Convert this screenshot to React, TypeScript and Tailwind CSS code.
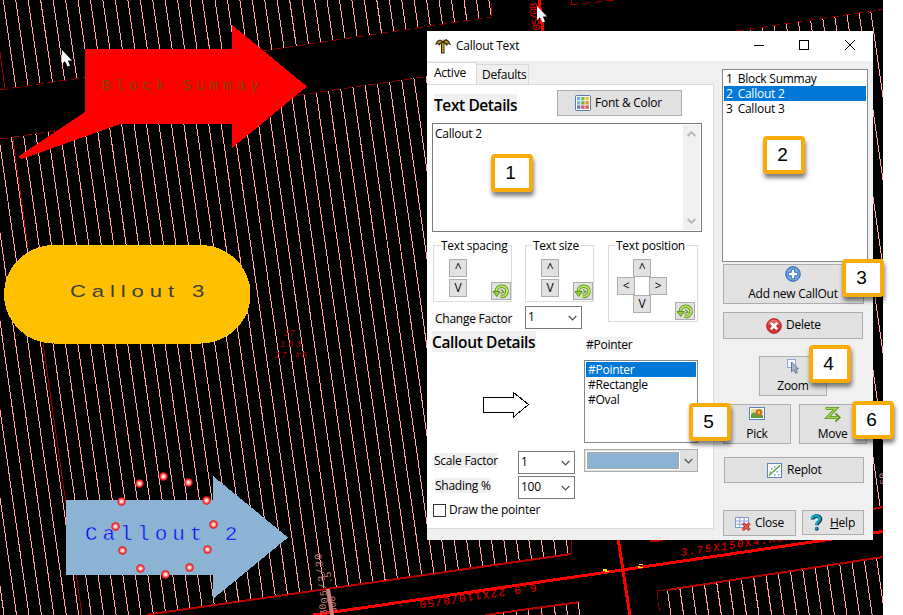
import React from "react";

type Seg = [number, number, number, number];

const range = (n: number, from = 0) => Array.from({ length: n }, (_, i) => i + from);

const upper: Seg[] = range(40).map((k) => {
  const x0 = 3.3 + 12.45 * k;
  const y = (90 - 0.1487 * x0) / 1.0213;
  return [x0, 0, x0 + 0.143 * y, y];
});

const middle: Seg[] = range(47, -7).map((k) => {
  const x0 = 4.5 + 12.45 * k;
  const a = (139 - 0.1467 * x0) / 1.0207;
  const b = (635.8 - 0.1433 * x0) / 1.0202;
  return [x0 + 0.141 * a, a, x0 + 0.141 * b, b];
});

const right: Seg[] = range(14, -3).map((k) => {
  const x0 = 745.1 + 12.4 * k + (k < 10 ? 0.6 : 0);
  const a = (139 - 0.1467 * x0) / 1.0207;
  const b = (636 - 0.146 * x0) / 1.0202;
  return [x0 + 0.143 * a, a, x0 + 0.143 * b, b];
});

const lowerRight: Seg[] = range(18).map((k) => {
  const x = 667.5 + 12.3 * k;
  const y = 590 - 0.154 * (x - 667);
  return [x, y, x + 0.143 * (616 - y), 616];
});

const lowerMid: Seg[] = [503, 516, 528, 541, 554, 566, 578].map((x) => {
  const y = 602 + 0.14 * (578 - x);
  return [x, y, x + 0.143 * (616 - y), 616];
});

const dots = [
  [139.5, 483.5], [163.5, 476.5], [188.5, 482.5], [121.5, 501.5], [206.5, 500.5], [115.5, 526.5],
  [213.5, 524.5], [122.5, 550.5], [207.5, 549.5], [140.5, 568.5], [189.5, 567.5], [165.5, 574.5],
];

function Pointer({ x, y }: { x: number; y: number }) {
  return (
    <path
      transform={`translate(${x} ${y})`}
      d="M0 0V14L3 11.2L5.6 16.4L8 15.4L5.8 10.4H10Z"
      fill="#fff"
    />
  );
}

function Drawing() {
  return (
    <svg width="883" height="615" viewBox="0 0 883 615" className="block bg-black">
      <defs>
        <radialGradient id="dot">
          <stop offset="0" stopColor="#fff" />
          <stop offset="0.35" stopColor="#ffc4c4" />
          <stop offset="0.75" stopColor="#ff3030" />
          <stop offset="1" stopColor="#e01010" />
        </radialGradient>
      </defs>
      <g stroke="#ffa6a6" strokeWidth="1" shapeRendering="crispEdges">
        {[...upper, ...middle, ...right, ...lowerRight, ...lowerMid].map((s, i) => (
          <line key={i} x1={s[0]} y1={s[1]} x2={s[2]} y2={s[3]} />
        ))}
      </g>
      <g stroke="#900000" strokeWidth="1" shapeRendering="crispEdges" fill="none">
        <path d="M0 90L491 17M570 5L615 0M0 139L883 9.5" strokeDasharray="8 4" />
        <path d="M0 52L5 89M571 0V5M491 4V17M13 139L28 247M43 343L82 615M571 540V554" />
        <path d="M657 591L660 615M657 591L667 589.5" strokeDasharray="8 4" />
      </g>
      <g stroke="#b80000" strokeWidth="2" shapeRendering="crispEdges" fill="none">
        <path d="M148 614.5L571 554M485 615L578 602.3M667 590L883 557M650 541.5L663 540M873 509L883 507" />
      </g>
      <g stroke="#ff0000" strokeWidth="3" shapeRendering="crispEdges" fill="none">
        <path d="M313 615L622 570L883 531.5M618 538L630 616" />
        <path d="M539 0L543 31" />
      </g>
      <path d="M328 589L332 615" stroke="#c88080" strokeWidth="4" />
      <g fill="#f00000" fontFamily="Liberation Mono, monospace" fontSize="11">
        <text transform="translate(681 556) rotate(-8.3)" fontStyle="italic" textLength="120">3.75X150X4.X0/0</text>
        <text transform="translate(536 584) rotate(171.7)" textLength="118">6.9 22X110/0/50</text>
        <text transform="translate(540 30) rotate(-98)" textLength="28">0S/08</text>
      </g>
      <g fill="#c88080" fontFamily="Liberation Mono, monospace" fontSize="10">
        <text transform="translate(328 603) rotate(-98)" textLength="50">05/3/30</text>
        <text transform="translate(327 615) rotate(-98)">30</text>
        <text transform="translate(337 613) rotate(-98)">500</text>
        <text transform="translate(332 583) rotate(-98)">.5</text>
        <text transform="translate(887 484) rotate(-98)">50</text>
      </g>
      <g fill="#b00000" fontFamily="Liberation Mono, monospace" fontSize="9" fontStyle="italic">
        <text x="284" y="336">27</text>
        <text x="280" y="347" textLength="21">163</text>
        <text x="274" y="358" textLength="33">27 #5</text>
      </g>
      <g fill="#ffe800" shapeRendering="crispEdges">
        <path d="M603 569h4v2h2v1h-4v-1h-2zM639 564h4v1h-4zM638 566h2v1h3v1h-5z" />
      </g>

      <path
        d="M85 49H232V25L307 86.5L232 148V124H120L22 159L19 158V156L85 112Z"
        fill="#ff0000"
        shapeRendering="crispEdges"
      />
      <text x="102" y="90" fill="#824400" fontFamily="Liberation Mono, monospace" fontSize="15" textLength="157">
        Block Summay
      </text>
      <rect x="4" y="245" width="246.5" height="98.5" rx="50" ry="49.2" fill="#ffc000" shapeRendering="crispEdges" />
      <text
        transform="translate(70 297) scale(1.3 1)"
        fill="#404040"
        fontFamily="Liberation Sans, Arial, sans-serif"
        fontSize="17"
        textLength="103"
      >
        Callout 3
      </text>
      <path
        d="M66 500H213V476L288 537.5L213 599V575H66Z"
        fill="#8cb3d3"
        shapeRendering="crispEdges"
      />
      <text
        x="85"
        y="540"
        fill="#0000ff"
        stroke="#8cb3d3"
        strokeWidth=".5"
        fontFamily="Liberation Mono, monospace"
        fontSize="21"
        textLength="152"
      >
        Callout 2
      </text>
      {dots.map(([x, y]) => (
        <circle key={`${x}-${y}`} cx={x} cy={y} r="4.2" fill="url(#dot)" />
      ))}
      <Pointer x={62} y={50} />
      <Pointer x={537} y={6} />
    </svg>
  );
}

function PalmIcon() {
  return (
    <svg width="16" height="16" viewBox="0 0 16 16">
      <path d="M0 7L2 3L5 1.500L8 3L11 1L14 3L16 7L13 6L12 8L9.500 5.500V15.500H6V5.500L4 8L3 6Z" fill="#2d2408" />
      <path d="M1.500 5L5 2.500L7 4L4 5.500ZM14.500 5L11 2.500L9 4L12 5.500ZM7 5H8.700V14.500H7ZM7 2L8.500 1V3Z" fill="#c9981c" />
    </svg>
  );
}

function PaletteIcon() {
  const c = ["#6fb4e8", "#79c142", "#e8c33c", "#79b8e0", "#76b53c", "#e88a3c", "#5a7fd0", "#e0508c", "#e0603c"];
  return (
    <svg width="16" height="16" viewBox="0 0 16 16">
      <rect x=".5" y=".5" width="15" height="15" rx="1" fill="#fff" stroke="#5a79b0" />
      {c.map((f, i) => (
        <rect key={i} x={2 + (i % 3) * 4.2} y={2 + Math.floor(i / 3) * 4.2} width="3.4" height="3.4" fill={f} />
      ))}
    </svg>
  );
}

function ResetIcon() {
  return (
    <svg width="18" height="17" viewBox="0 0 18 17">
      <path d="M4.500 9C4 5 7 3 10 3.200C13.500 3.500 15.500 6 15 9.200C14.500 12.500 11.500 14 8.500 13.200" fill="none" stroke="#4f8a10" strokeWidth="3.400" />
      <path d="M4.500 9C4 5 7 3 10 3.200C13.500 3.500 15.500 6 15 9.200C14.500 12.500 11.500 14 8.500 13.200" fill="none" stroke="#b8e45a" strokeWidth="2" />
      <path d="M1 8.500H8.200L4.800 13.500Z" fill="#98d03c" stroke="#4f8a10" strokeWidth=".9" />
      <path d="M9 6.500L12 9L8.500 10.500" fill="none" stroke="#5d9718" strokeWidth="1.200" />
    </svg>
  );
}

function PlusIcon() {
  return (
    <svg width="16" height="16" viewBox="0 0 16 16">
      <circle cx="8" cy="8" r="7.400" fill="#4d8ad0" stroke="#3468b0" strokeWidth=".8" />
      <circle cx="8" cy="8" r="6.200" fill="#7db2e6" />
      <path d="M6.300 3.300H9.700V6.300H12.700V9.700H9.700V12.700H6.300V9.700H3.300V6.300H6.300Z" fill="#fff" stroke="#2e60a8" strokeWidth=".9" />
    </svg>
  );
}

function DeleteIcon() {
  return (
    <svg width="16" height="16" viewBox="0 0 16 16">
      <circle cx="8" cy="8" r="7.400" fill="#d83030" stroke="#b02020" strokeWidth=".8" />
      <path d="M2 6.500A6.200 6.200 0 0 1 14 6.500Q8 9 2 6.500Z" fill="#ea7068" />
      <path d="M3.600 5.600L5.600 3.600L8 5.600L10.400 3.600L12.400 5.600L10.400 8L12.400 10.400L10.400 12.400L8 10.400L5.600 12.400L3.600 10.400L5.600 8Z" fill="#fff" stroke="#a82020" strokeWidth=".6" />
    </svg>
  );
}

function ZoomIcon() {
  return (
    <svg width="16" height="16" viewBox="0 0 16 16">
      <rect x="2.500" y="1.500" width="8" height="8" fill="#f6f9ff" stroke="#8fa6d4" />
      <path d="M6.500 4V14L8.800 11.800L10.600 15.300L12.400 14.400L10.700 11H13.500Z" fill="#a9b4c8" stroke="#5b6b8c" strokeWidth=".9" />
    </svg>
  );
}

function PictureIcon() {
  return (
    <svg width="16" height="14" viewBox="0 0 16 14">
      <rect x=".5" y=".5" width="15" height="12" fill="#fff" stroke="#5f83bd" />
      <rect x="2" y="2" width="12" height="4.500" fill="#f0d890" />
      <path d="M2 7Q5 4 8 7L14 8V11H2Z" fill="#5ea03a" />
      <circle cx="10" cy="5.500" r="3.300" fill="#d06c20" />
      <circle cx="10" cy="5.500" r="1.200" fill="#f8d060" />
    </svg>
  );
}

function MoveIcon() {
  const d = "M1.500 2.500H12L3.500 11.500H13";
  return (
    <svg width="17" height="16" viewBox="0 0 17 16">
      <path d={d} fill="none" stroke="#5c9420" strokeWidth="3.200" />
      <path d="M11.500 7.500L15.700 11.500L11.500 15.500" fill="none" stroke="#5c9420" strokeWidth="1.800" />
      <path d={d} fill="none" stroke="#a4d658" strokeWidth="1.400" />
    </svg>
  );
}

function ReplotIcon() {
  return (
    <svg width="15" height="15" viewBox="0 0 15 15">
      <rect x=".5" y=".5" width="14" height="14" fill="#fbfdff" stroke="#6286bc" />
      <path d="M2 12.500L13 2.500" stroke="#58a030" strokeWidth="1.400" />
      <path d="M4 5h1.500v1.500h-1.500zM7 3h1.500v1.500h-1.500zM2.500 8.500h1.500v1.500h-1.500zM9.500 8h1.500v1.500h-1.500zM7 11h1.500v1.500h-1.500zM11 11h1.500v1.500h-1.500z" fill="#6f93d0" />
    </svg>
  );
}

function TableCloseIcon() {
  return (
    <svg width="16" height="15" viewBox="0 0 16 15">
      <path d="M.5 1.500H13.500V11.500H.5Z" fill="#f8fbff" stroke="#7d98cc" />
      <path d="M.5 5H13.500M.5 8.200H13.500M4.800 1.500V11.500M9.200 1.500V11.500" stroke="#8fa6d6" />
      <path d="M7.800 7.300L14.600 14M14.600 7.300L7.800 14" stroke="#b82424" strokeWidth="3" />
      <path d="M8 7.500L14.400 13.800M14.400 7.500L8 13.800" stroke="#ec6058" strokeWidth="1.500" />
    </svg>
  );
}

function HelpIcon() {
  return (
    <svg width="13" height="17" viewBox="0 0 13 17" fill="none">
      <path d="M2.500 5.500C2.500 1 11 1 10.500 5.300C10.200 8 7 8 7 11.300" stroke="#062a50" strokeWidth="3.600" />
      <path d="M2 5C2 .8 10.300 .8 9.800 5C9.500 7.600 6.300 7.800 6.300 11" stroke="#12a8b8" strokeWidth="2.500" />
      <circle cx="6.800" cy="14.700" r="2" fill="#0a3a80" />
      <circle cx="6.300" cy="14.300" r="1.200" fill="#12a8b8" />
    </svg>
  );
}

function Chevron({ up = false, color = "#505050" }: { up?: boolean; color?: string }) {
  return (
    <svg width="9" height="6" viewBox="0 0 9 6" fill="none">
      <path
        d={up ? "M.7 5L4.500 1.200L8.300 5" : "M.7 1L4.500 4.800L8.300 1"}
        stroke={color}
        strokeWidth={color === "#505050" ? 1.2 : 1.8}
      />
    </svg>
  );
}

function Btn({ className, children }: { className: string; children: React.ReactNode }) {
  return (
    <button className={`flex shrink-0 items-center border border-[#adadad] bg-[#e1e1e1] ${className}`}>
      {children}
    </button>
  );
}

function Select({ value }: { value: string }) {
  return (
    <div className="flex h-[23px] w-[57px] shrink-0 items-center justify-between border border-[#7a7a7a] bg-white pr-1 pl-[2px]">
      <span className="-mt-0.5">{value}</span>
      <Chevron />
    </div>
  );
}

function Small({ className = "", children }: { className?: string; children: React.ReactNode }) {
  return <Btn className={`size-[18px] justify-center leading-none ${className}`}>{children}</Btn>;
}

function Group({ title, className, children }: { title: string; className: string; children: React.ReactNode }) {
  return (
    <div className={`flex shrink-0 flex-col border border-[#dcdcdc] ${className}`}>
      <div className="-mt-2 ml-[6px] h-4 self-start bg-white px-px leading-4 whitespace-nowrap">{title}</div>
      {children}
    </div>
  );
}

function Reset({ className }: { className: string }) {
  return (
    <Btn className={`h-[18px] w-5 justify-center ${className}`}>
      <ResetIcon />
    </Btn>
  );
}

function Stepper() {
  return (
    <div className="flex pt-[5px] pl-[15px]">
      <div className="flex flex-col gap-[2px]">
        <Small>^</Small>
        <Small>V</Small>
      </div>
    </div>
  );
}

function LeftPanel() {
  return (
    <div className="flex w-[287px] flex-col">
      <div className="flex h-[23px] items-end">
        <div className="h-[22px] w-[50px] border-t border-r border-[#d9d9d9] bg-white pl-[7px] leading-[20px]">Active</div>
        <div className="h-5 w-[52px] border-t border-r border-[#d9d9d9] pl-[5px] leading-5 whitespace-nowrap">Defaults</div>
      </div>
      <div className="flex h-[445px] flex-col border-r border-b border-[#dcdcdc] bg-white">
        <div className="flex h-[39px] shrink-0 border-t border-[#dcdcdc] pt-[5px] pl-[7px]">
          <div className="mt-[4px] h-[17px] w-[83px] bg-[#f0f0f0] text-[15.5px] leading-[22px] font-semibold tracking-[-0.4px] whitespace-nowrap">
            Text Details
          </div>
          <Btn className="ml-10 h-[26px] w-[125px] gap-[5px] pl-[17px]">
            <PaletteIcon />
            <span className="-ml-px">Font &amp; Color</span>
          </Btn>
        </div>
        <div className="ml-[5px] flex h-[109px] w-[270px] shrink-0 justify-between border border-[#7a7a7a] p-px">
          <div className="pt-px pl-px leading-4">Callout 2</div>
          <div className="flex w-[17px] flex-col items-center justify-between bg-[#f0f0f0] py-[6px]">
            <Chevron up color="#b4b4b4" />
            <Chevron color="#b4b4b4" />
          </div>
        </div>

        <div className="mt-[13px] ml-[6px] flex h-[85px] shrink-0">
          <div className="w-[175px]">
            <div className="flex gap-[13px]">
              <Group title="Text spacing" className="h-[57px] w-[79px]">
                <div className="flex justify-between">
                  <Stepper />
                  <Reset className="mt-[28px]" />
                </div>
              </Group>
              <Group title="Text size" className="h-[57px] w-[69px]">
                <div className="flex justify-between">
                  <Stepper />
                  <Reset className="mt-[28px]" />
                </div>
              </Group>
            </div>
            <div className="mt-1 flex items-center">
              <div className="mt-[2px] ml-[2px] h-[13px] w-[77px] bg-[#f3f3f3] leading-[13px] whitespace-nowrap">Change Factor</div>
              <div className="ml-[13px]">
                <Select value="1" />
              </div>
            </div>
          </div>
          <Group title="Text position" className="h-[77px] w-[90px]">
            <div className="flex flex-col pt-[5px] pl-[8px]">
              <Small className="ml-4">^</Small>
              <div className="flex gap-[14px]">
                <Small>&lt;</Small>
                <Small>&gt;</Small>
              </div>
              <div className="flex">
                <Small className="ml-4">V</Small>
                <Reset className="mt-[7px] ml-[24px]" />
              </div>
            </div>
          </Group>
        </div>

        <div className="mt-px flex">
          <div className="flex w-[157px] flex-col pl-[5px]">
            <div className="h-[21px] w-[104px] bg-[#f0f0f0] text-[15.5px] leading-[23px] font-semibold tracking-[-0.35px] whitespace-nowrap">
              Callout Details
            </div>
            <svg width="48" height="28" viewBox="0 0 48 28" className="mt-[39px] ml-[51px] shrink-0">
              <path d="M.5 6.500H30.500V1.500L45.500 13.500L30.500 26V21.500H.5Z" fill="none" stroke="#000" shapeRendering="crispEdges" />
            </svg>
            <div className="mt-[32px] flex items-start">
              <div className="mt-[2px] ml-[2px] h-[15px] w-[63px] shrink-0 bg-[#f0f0f0] leading-[15px] whitespace-nowrap">Scale Factor</div>
              <div className="ml-[21px]">
                <Select value="1" />
              </div>
            </div>
            <div className="mt-[2px] flex items-start">
              <div className="mt-[2px] ml-[3px] h-[15px] w-[56px] shrink-0 bg-[#f0f0f0] leading-[15px] whitespace-nowrap">Shading %</div>
              <div className="ml-[27px]">
                <Select value="100" />
              </div>
            </div>
            <div className="mt-1 ml-px flex items-center gap-[3px] whitespace-nowrap">
              <div className="size-[13px] shrink-0 border border-[#333]" />
              <div className="h-[14px] leading-[14px]">Draw the pointer</div>
            </div>
          </div>
          <div className="flex w-[114px] flex-col">
            <div className="mt-[6px] ml-[2px] h-[15px] w-[45px] bg-[#f3f3f3] leading-[15px]">#Pointer</div>
            <div className="mt-2 h-[83px] border border-[#828790] p-px leading-[15px]">
              <div className="bg-[#0078d7] pl-[2px] text-white">#Pointer</div>
              <div className="pl-[2px]">#Rectangle</div>
              <div className="pl-[2px]">#Oval</div>
            </div>
            <div className="mt-[6px] flex h-[23px] items-center justify-between border border-[#adadad] bg-[#e1e1e1] pr-1 pl-px">
              <div className="h-[19px] w-[94px] border border-white bg-[#8cb3d3] outline-1 -outline-offset-2 outline-[#a8a8a8]" />
              <Chevron />
            </div>
          </div>
        </div>
      </div>
    </div>
  );
}

function RightPanel() {
  return (
    <div className="flex flex-col pt-2 pl-[9px]">
      <div className="-ml-px h-[193px] w-[146px] shrink-0 border border-[#828790] bg-white px-px pt-px leading-[15px]">
        <div className="flex gap-[5px] pl-[2px]"><span>1</span><span>Block Summay</span></div>
        <div className="flex gap-[5px] bg-[#0078d7] pl-[2px] text-white"><span>2</span><span>Callout 2</span></div>
        <div className="flex gap-[5px] pl-[2px]"><span>3</span><span>Callout 3</span></div>
      </div>
      <Btn className="mt-[2px] h-10 w-[141px] flex-col pt-px pr-px">
        <PlusIcon />
        <span className="mt-[3px] leading-[17px]">Add new CallOut</span>
      </Btn>
      <Btn className="mt-2 h-[27px] w-[140px] gap-1 pl-[42px]">
        <DeleteIcon />
        <span className="-mt-px">Delete</span>
      </Btn>
      <Btn className="mt-[17px] ml-9 h-10 w-[68px] flex-col pt-px">
        <ZoomIcon />
        <span className="mt-[3px] leading-[17px]">Zoom</span>
      </Btn>
      <div className="mt-2 flex gap-2">
        <Btn className="h-10 w-[68px] flex-col pt-[2px]">
          <PictureIcon />
          <span className="mt-1 leading-[17px]">Pick</span>
        </Btn>
        <Btn className="h-10 w-[68px] flex-col pt-px pr-px">
          <MoveIcon />
          <span className="mt-[3px] leading-[17px]">Move</span>
        </Btn>
      </div>
      <Btn className="mt-[13px] ml-px h-[26px] w-[140px] gap-[5px] pl-[42px]">
        <ReplotIcon />
        <span>Replot</span>
      </Btn>
      <div className="mt-[27px] flex gap-[6px]">
        <Btn className="h-[26px] w-[73px] gap-[4px] pl-[11px]">
          <TableCloseIcon />
          <span>Close</span>
        </Btn>
        <Btn className="h-[25px] w-[62px] gap-[7px] pl-[7px]">
          <HelpIcon />
          <span><span className="underline">H</span>elp</span>
        </Btn>
      </div>
    </div>
  );
}

function CalloutDialog() {
  return (
    <div className="absolute top-[31px] left-[427px] flex h-[509px] w-[446px] flex-col bg-[#f0f0f0]">
      <div className="flex h-[30px] shrink-0 items-center bg-white pl-2">
        <PalmIcon />
        <span className="ml-[5px] flex-1">Callout Text</span>
        <svg width="102" height="12" viewBox="0 0 102 12" fill="none" stroke="#000" className="mt-[-2px] mr-[17px]">
          <path d="M0 6.500H10M45.500 1.500H54.500V10.500H45.500Z" shapeRendering="crispEdges" />
          <path d="M91 1L101 11M101 1L91 11" />
        </svg>
      </div>
      <div className="flex flex-1">
        <LeftPanel />
        <RightPanel />
      </div>
    </div>
  );
}

function Badge({ n, className }: { n: number; className: string }) {
  return (
    <div
      className={`absolute flex h-[38px] w-[42px] items-center justify-center rounded-[4px] border-4 border-[#f9ac09] bg-white pr-[3px] pb-[2px] font-['Liberation_Sans',Arial,sans-serif] text-[19px] leading-none tracking-normal text-black shadow-[1px_4px_4px_rgba(0,0,0,0.5)] ${className}`}
    >
      {n}
    </div>
  );
}

export default function App() {
  return (
    <div className="relative h-[615px] w-[903px] overflow-hidden bg-white font-['Open_Sans','Noto_Sans',sans-serif] text-[12px] tracking-[-0.25px] text-black">
      <Drawing />
      <CalloutDialog />
      <Badge n={1} className="top-[154px] left-[491px]" />
      <Badge n={2} className="top-[136px] left-[763px]" />
      <Badge n={3} className="top-[259px] left-[842px]" />
      <Badge n={4} className="top-[345px] left-[809px]" />
      <Badge n={5} className="top-[403px] left-[689px]" />
      <Badge n={6} className="top-[401px] left-[852px]" />
    </div>
  );
}
